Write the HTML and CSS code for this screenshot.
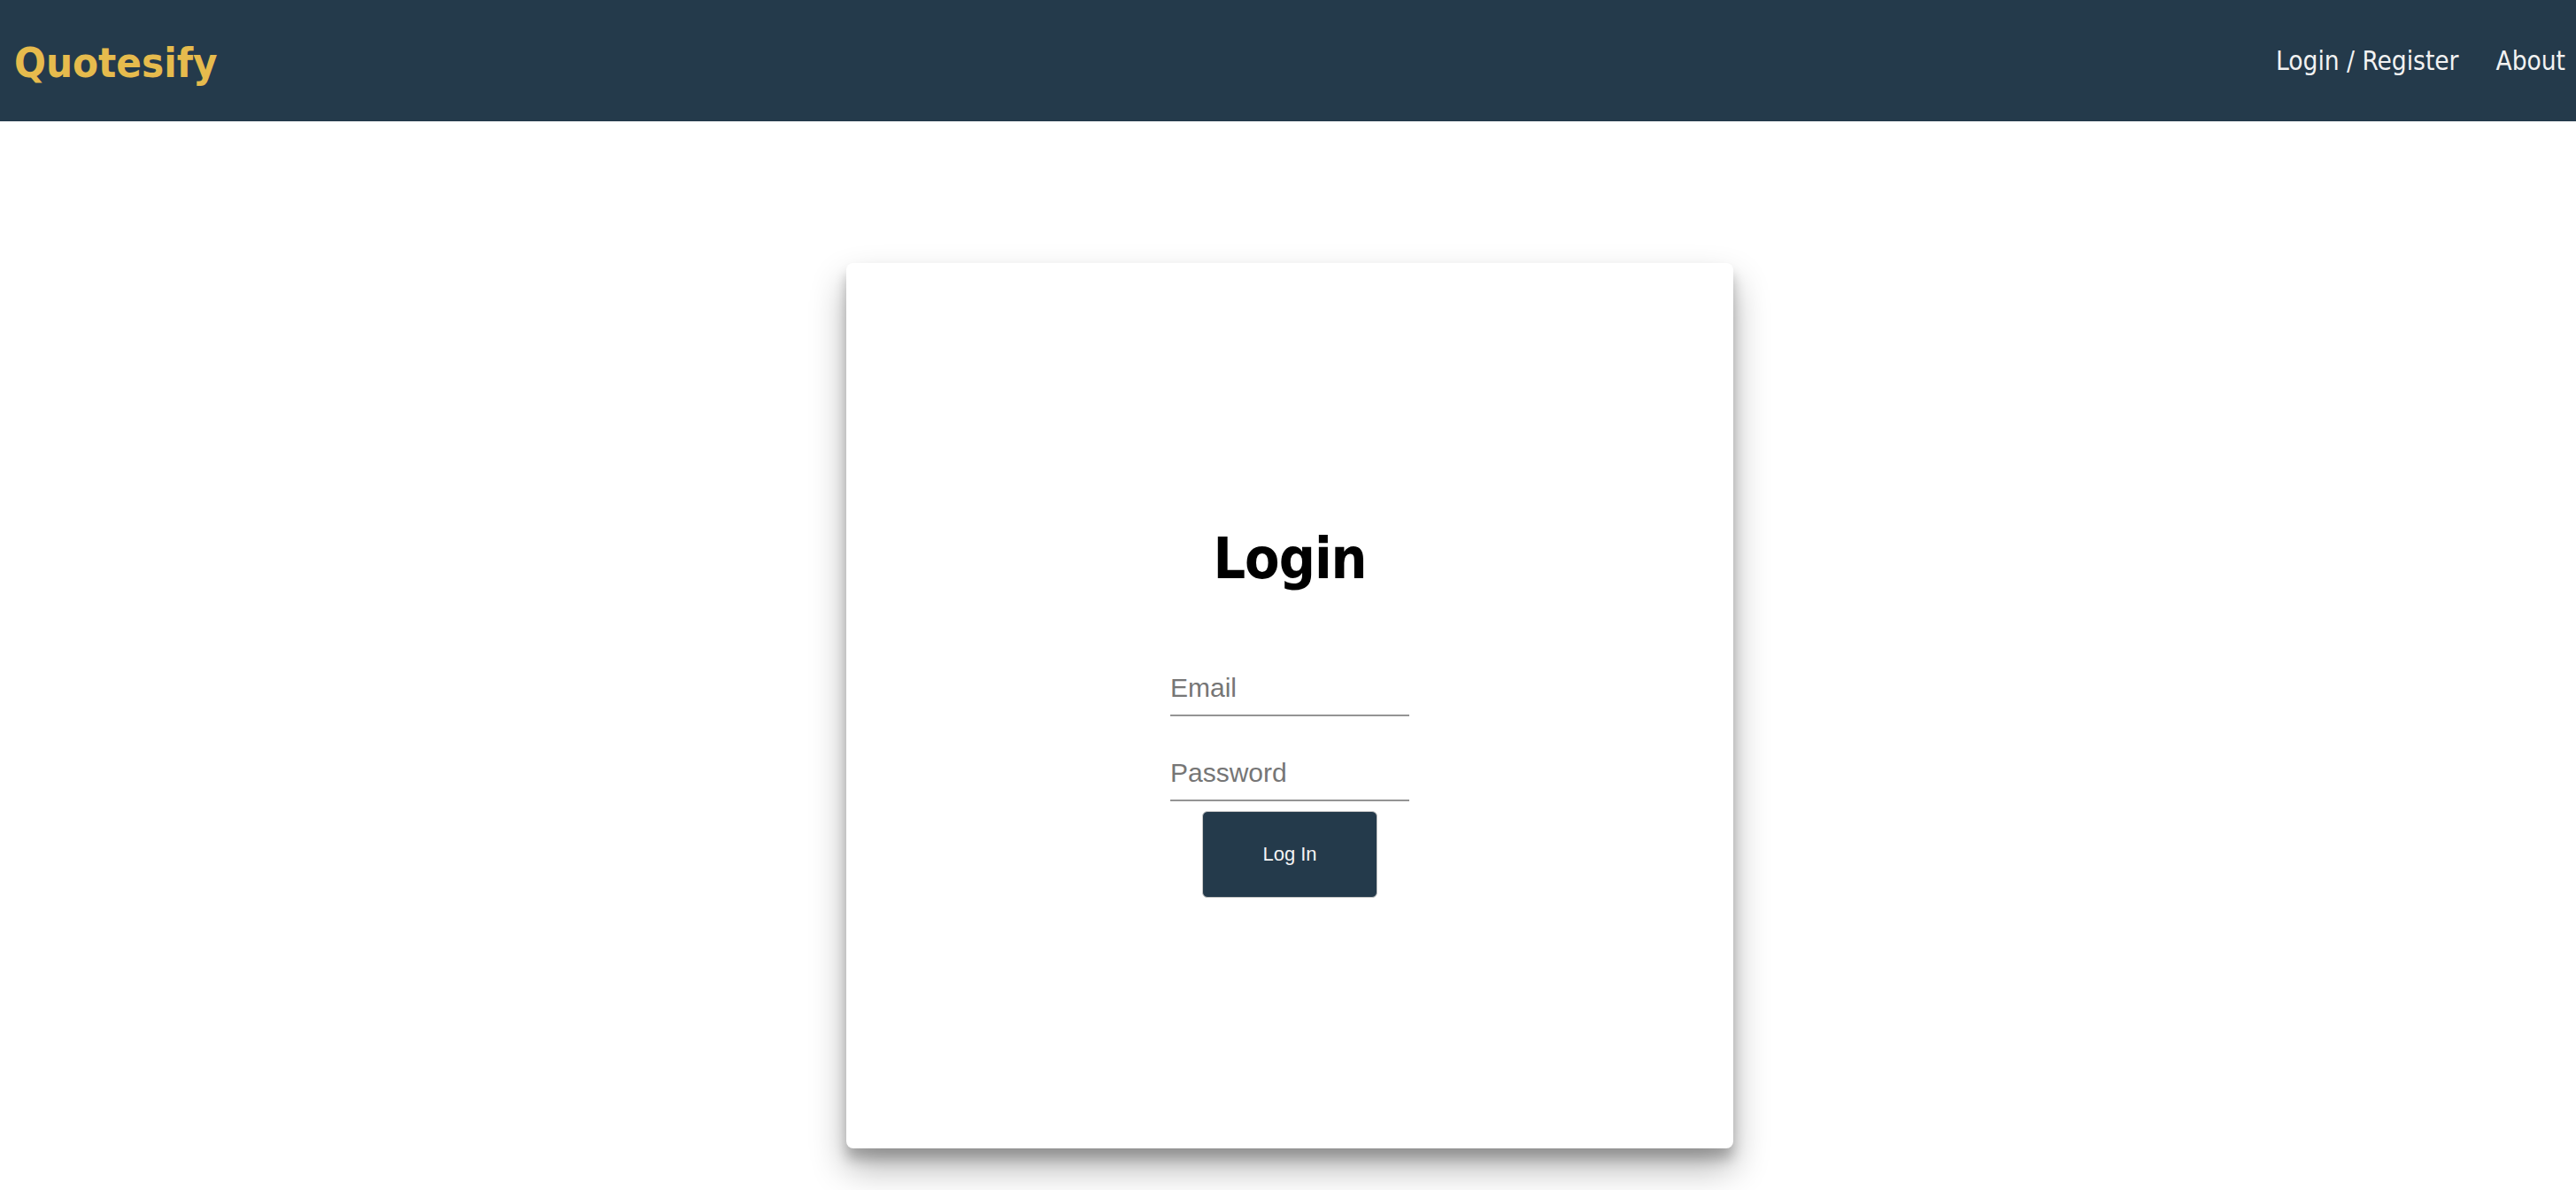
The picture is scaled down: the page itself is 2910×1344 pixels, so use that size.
FILE: index.html
```html
<!DOCTYPE html>
<html lang="en">
<head>
<meta charset="utf-8">
<title>Quotesify</title>
<link rel="stylesheet" href="styles.css">
</head>
<body>
<header class="navbar">
  <a class="brand" href="#">Quotesify</a>
  <nav class="nav-links">
    <a href="#">Login / Register</a>
    <a href="#">About</a>
  </nav>
</header>
<main class="page">
  <section class="card">
    <h1 class="title">Login</h1>
    <form class="login-form">
      <input class="field" type="email" placeholder="Email">
      <input class="field" type="password" placeholder="Password">
      <button class="submit" type="button">Log In</button>
    </form>
  </section>
</main>
</body>
</html>
```

FILE: styles.css
```css
html, body {
  margin: 0;
  padding: 0;
  background: #ffffff;
}

body {
  font-family: "DejaVu Sans Condensed", "DejaVu Sans", sans-serif;
  overflow: hidden;
  height: 1344px;
}

.navbar {
  height: 137px;
  background: #243a4b;
  display: flex;
  align-items: center;
  justify-content: space-between;
  padding: 0 12px 0 16px;
}

.brand {
  color: #e6bb4d;
  font-family: "DejaVu Sans Condensed", "DejaVu Sans", sans-serif;
  font-weight: bold;
  font-size: 47px;
  text-decoration: none;
  margin-top: 4px;
}

.nav-links {
  display: flex;
  gap: 42px;
}

.nav-links a {
  color: #f2f2f2;
  font-family: "DejaVu Sans Condensed", "DejaVu Sans", sans-serif;
  font-size: 29.5px;
  text-decoration: none;
}

.page {
  display: flex;
  justify-content: center;
  padding-top: 160px;
  padding-left: 4px;
}

.card {
  width: 1002px;
  height: 1000px;
  box-sizing: border-box;
  background: #ffffff;
  border-radius: 8px;
  box-shadow: 0 22px 40px rgba(0, 0, 0, 0.3), 0 12px 14px rgba(0, 0, 0, 0.22);
  display: flex;
  flex-direction: column;
  align-items: center;
  justify-content: center;
  padding-top: 13px;
}

.title {
  margin: 0 0 91px;
  font-family: "DejaVu Sans Condensed", "DejaVu Sans", sans-serif;
  font-weight: bold;
  font-size: 64px;
  letter-spacing: -1px;
  line-height: 75px;
  color: #000000;
}

.login-form {
  display: flex;
  flex-direction: column;
  align-items: center;
}

.field {
  width: 270px;
  height: 49px;
  box-sizing: border-box;
  border: none;
  border-bottom: 2px solid #949494;
  padding: 0 0 13px;
  margin: 0 0 47px;
  font-family: "Liberation Sans", Arial, sans-serif;
  font-size: 30px;
  color: #333333;
  background: transparent;
  outline: none;
}

.field:last-of-type {
  margin-bottom: 11px;
}

.field::placeholder {
  color: #767676;
}

.submit {
  width: 198px;
  height: 98px;
  background: #243a4b;
  color: #f4f4f4;
  border: 1px solid #c6c6c6;
  border-radius: 6px;
  font-family: "Liberation Sans", Arial, sans-serif;
  font-size: 22px;
  cursor: pointer;
}
```
